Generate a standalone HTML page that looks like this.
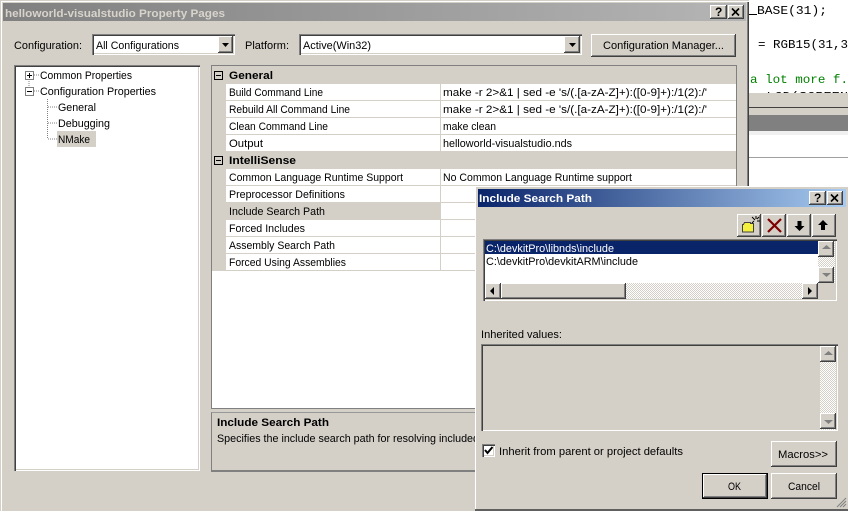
<!DOCTYPE html>
<html><head><meta charset="utf-8"><style>
html,body{margin:0;padding:0;background:#fff}
#p{position:relative;width:848px;height:511px;overflow:hidden;background:#fff;font-family:"Liberation Sans",sans-serif}
#p div{position:absolute;box-sizing:border-box}
.b{background:#d4d0c8}
.w{background:#fff}
.r{background:#d4d0c8;box-shadow:inset -1px -1px #404040,inset 1px 1px #fff,inset -2px -2px #808080,inset 2px 2px #d4d0c8}
.s{box-shadow:inset 1px 1px #808080,inset 2px 2px #404040,inset -1px -1px #fff,inset -2px -2px #d4d0c8}
.d{background:repeating-conic-gradient(#fff 0 25%,#d4d0c8 0 50%) 0 0/2px 2px}
svg{position:absolute;left:0;top:0;overflow:visible}
text{font-size:11px;fill:#000;font-family:"Liberation Sans",sans-serif}
.bd{font-weight:bold}
.m{font-family:"Liberation Mono",monospace;font-size:12px}
</style></head><body><div id="p">

<!-- background code window -->
<svg width="848" height="511">
<rect x="749" y="14" width="8" height="1" fill="#000"/>
<text class="m" x="757" y="14" textLength="70" lengthAdjust="spacingAndGlyphs">BASE(31);</text>
<text class="m" x="758" y="48" textLength="90" lengthAdjust="spacingAndGlyphs">= RGB15(31,3</text>
<text class="m" x="750" y="83" textLength="98" lengthAdjust="spacingAndGlyphs" style="fill:#008000">a lot more f.</text>
<text class="m" x="750" y="100" textLength="98" lengthAdjust="spacingAndGlyphs">: LCD(SCREEN</text>
</svg>
<div class="b" style="left:749px;top:93px;width:99px;height:14px"></div>
<div style="left:749px;top:107px;width:99px;height:1px;background:#404040"></div>
<div class="b" style="left:749px;top:108px;width:99px;height:7px"></div>
<div style="left:749px;top:115px;width:99px;height:16px;background:#808080"></div>
<div style="left:749px;top:131px;width:99px;height:4px;background:#f0f0f0"></div>
<div style="left:749px;top:157px;width:99px;height:1px;background:#a0a0a0"></div>

<!-- main window -->
<div class="b" style="left:0;top:0;width:749px;height:511px;box-shadow:inset 1px 1px #d4d0c8,inset 2px 2px #fff,inset -1px 0 #404040,inset -2px 0 #808080"></div>
<div style="left:3px;top:3px;width:743px;height:18px;background:linear-gradient(90deg,#808080,#b5b5b5)"></div>
<div class="r" style="left:710px;top:5px;width:17px;height:14px"></div>
<div class="r" style="left:728px;top:5px;width:16px;height:14px"></div>

<!-- combos -->
<div class="w s" style="left:92px;top:34px;width:143px;height:21px"></div>
<div class="r" style="left:218px;top:36px;width:15px;height:17px"></div>
<div class="w s" style="left:299px;top:34px;width:283px;height:21px"></div>
<div class="r" style="left:564px;top:36px;width:16px;height:17px"></div>
<div class="r" style="left:591px;top:34px;width:145px;height:23px"></div>

<!-- tree -->
<div class="w s" style="left:14px;top:65px;width:186px;height:406px"></div>
<div class="b" style="left:57px;top:131px;width:39px;height:16px"></div>

<!-- property grid -->
<div class="w" style="left:211px;top:65px;width:526px;height:344px;border:1px solid #808080"></div>
<div class="b" style="left:212px;top:66px;width:524px;height:18px"></div>
<div class="b" style="left:212px;top:84px;width:14px;height:187px"></div>
<div class="b" style="left:226px;top:100px;width:510px;height:1px"></div>
<div class="b" style="left:226px;top:117px;width:510px;height:1px"></div>
<div class="b" style="left:226px;top:134px;width:510px;height:1px"></div>
<div class="b" style="left:212px;top:151px;width:524px;height:18px"></div>
<div class="b" style="left:226px;top:185px;width:510px;height:1px"></div>
<div class="b" style="left:226px;top:202px;width:510px;height:1px"></div>
<div class="b" style="left:226px;top:203px;width:214px;height:17px"></div>
<div class="b" style="left:226px;top:219px;width:510px;height:1px"></div>
<div class="b" style="left:226px;top:236px;width:510px;height:1px"></div>
<div class="b" style="left:226px;top:253px;width:510px;height:1px"></div>
<div class="b" style="left:226px;top:270px;width:510px;height:1px"></div>
<div class="b" style="left:440px;top:84px;width:1px;height:67px"></div>
<div class="b" style="left:440px;top:169px;width:1px;height:102px"></div>
<!-- description -->
<div style="left:211px;top:412px;width:526px;height:60px;border-top:1px solid #999;border-bottom:2px solid #808080;border-left:1px solid #808080;border-right:1px solid #a0a0a0"></div>

<svg width="848" height="511">
<!-- title buttons -->
<text class="bd" x="715" y="16" style="font-size:12px">?</text>
<path d="M732 8.500l7 7M739 8.500l-7 7" stroke="#000" stroke-width="1.600" fill="none"/>
<text class="bd" x="5" y="17" textLength="220" lengthAdjust="spacingAndGlyphs" style="fill:#d8d4cc">helloworld-visualstudio Property Pages</text>

<path d="M222 43h7l-3.500 4z" fill="#000"/>
<path d="M569 43h7l-3.500 4z" fill="#000"/>

<text x="14" y="49" textLength="68" lengthAdjust="spacingAndGlyphs">Configuration:</text>
<text x="96" y="49" textLength="83" lengthAdjust="spacingAndGlyphs">All Configurations</text>
<text x="245" y="49" textLength="44" lengthAdjust="spacingAndGlyphs">Platform:</text>
<text x="303" y="49" textLength="68" lengthAdjust="spacingAndGlyphs">Active(Win32)</text>
<text x="603" y="49" textLength="121" lengthAdjust="spacingAndGlyphs">Configuration Manager...</text>

<!-- tree -->
<path d="M29 79v8M34 75h5M34 91h5" stroke="#808080" stroke-dasharray="1 1" fill="none"/>
<path d="M47.500 99v40M48 107h9M48 123h9M48 139h9" stroke="#808080" stroke-dasharray="1 1" fill="none"/>
<rect x="25.500" y="71.500" width="8" height="8" fill="#fff" stroke="#808080"/>
<path d="M27 75.500h5M29.500 73v5" stroke="#000" fill="none"/>
<rect x="25.500" y="87.500" width="8" height="8" fill="#fff" stroke="#808080"/>
<path d="M27 91.500h5" stroke="#000" fill="none"/>
<text x="40" y="79" textLength="92" lengthAdjust="spacingAndGlyphs">Common Properties</text>
<text x="40" y="95" textLength="116" lengthAdjust="spacingAndGlyphs">Configuration Properties</text>
<text x="58" y="111" textLength="38" lengthAdjust="spacingAndGlyphs">General</text>
<text x="58" y="127" textLength="52" lengthAdjust="spacingAndGlyphs">Debugging</text>
<text x="58" y="143" textLength="32" lengthAdjust="spacingAndGlyphs">NMake</text>

<!-- grid -->
<rect x="214.500" y="71.500" width="8" height="8" fill="#d4d0c8" stroke="#000"/>
<path d="M216 75.500h5" stroke="#000"/>
<rect x="214.500" y="156.500" width="8" height="8" fill="#d4d0c8" stroke="#000"/>
<path d="M216 160.500h5" stroke="#000"/>
<text class="bd" x="229" y="79" textLength="44" lengthAdjust="spacingAndGlyphs">General</text>
<text x="229" y="96" textLength="94" lengthAdjust="spacingAndGlyphs">Build Command Line</text>
<text x="229" y="113" textLength="121" lengthAdjust="spacingAndGlyphs">Rebuild All Command Line</text>
<text x="229" y="130" textLength="99" lengthAdjust="spacingAndGlyphs">Clean Command Line</text>
<text x="229" y="147" textLength="34" lengthAdjust="spacingAndGlyphs">Output</text>
<text class="bd" x="229" y="164" textLength="67" lengthAdjust="spacingAndGlyphs">IntelliSense</text>
<text x="229" y="181" textLength="174" lengthAdjust="spacingAndGlyphs">Common Language Runtime Support</text>
<text x="229" y="198" textLength="116" lengthAdjust="spacingAndGlyphs">Preprocessor Definitions</text>
<text x="229" y="215" textLength="96" lengthAdjust="spacingAndGlyphs">Include Search Path</text>
<text x="229" y="232" textLength="76" lengthAdjust="spacingAndGlyphs">Forced Includes</text>
<text x="229" y="249" textLength="106" lengthAdjust="spacingAndGlyphs">Assembly Search Path</text>
<text x="229" y="266" textLength="117" lengthAdjust="spacingAndGlyphs">Forced Using Assemblies</text>
<text x="443" y="96" textLength="264" lengthAdjust="spacingAndGlyphs">make -r 2&gt;&amp;1 | sed -e 's/(.[a-zA-Z]+):([0-9]+):/1(2):/'</text>
<text x="443" y="113" textLength="264" lengthAdjust="spacingAndGlyphs">make -r 2&gt;&amp;1 | sed -e 's/(.[a-zA-Z]+):([0-9]+):/1(2):/'</text>
<text x="443" y="130" textLength="53" lengthAdjust="spacingAndGlyphs">make clean</text>
<text x="443" y="147" textLength="129" lengthAdjust="spacingAndGlyphs">helloworld-visualstudio.nds</text>
<text x="443" y="181" textLength="189" lengthAdjust="spacingAndGlyphs">No Common Language Runtime support</text>
<text class="bd" x="217" y="426" textLength="112" lengthAdjust="spacingAndGlyphs">Include Search Path</text>
<text x="217" y="442" textLength="262" lengthAdjust="spacingAndGlyphs">Specifies the include search path for resolving included</text>
</svg>

<!-- dialog -->
<div class="b" style="left:475px;top:186px;width:373px;height:325px;box-shadow:inset 1px 1px #fff"></div>
<div style="left:475px;top:509px;width:373px;height:2px;background:#606060"></div>
<div style="left:478px;top:189px;width:368px;height:18px;background:linear-gradient(90deg,#0a246a,#a6caf0)"></div>
<div class="r" style="left:809px;top:191px;width:17px;height:14px"></div>
<div class="r" style="left:827px;top:191px;width:16px;height:14px"></div>

<div class="r" style="left:737px;top:214px;width:24px;height:23px"></div>
<div class="r" style="left:762px;top:214px;width:24px;height:23px"></div>
<div class="r" style="left:787px;top:214px;width:24px;height:23px"></div>
<div class="r" style="left:812px;top:214px;width:24px;height:23px"></div>

<div class="w s" style="left:483px;top:239px;width:354px;height:62px"></div>
<div style="left:485px;top:241px;width:333px;height:13px;background:#0a246a"></div>
<div class="d" style="left:818px;top:241px;width:17px;height:43px"></div>
<div class="r" style="left:818px;top:241px;width:16px;height:16px"></div>
<div class="r" style="left:818px;top:267px;width:16px;height:16px"></div>
<div class="d" style="left:485px;top:283px;width:333px;height:16px"></div>
<div class="r" style="left:485px;top:283px;width:16px;height:16px"></div>
<div class="r" style="left:501px;top:283px;width:125px;height:16px"></div>
<div class="r" style="left:802px;top:283px;width:16px;height:16px"></div>
<div class="b" style="left:818px;top:283px;width:17px;height:16px"></div>

<div class="s" style="left:481px;top:344px;width:357px;height:87px;background:#d4d0c8"></div>
<div class="d" style="left:820px;top:346px;width:16px;height:84px"></div>
<div class="r" style="left:820px;top:346px;width:16px;height:16px"></div>
<div class="r" style="left:820px;top:413px;width:16px;height:16px"></div>

<div class="w s" style="left:482px;top:444px;width:13px;height:13px"></div>
<div class="r" style="left:771px;top:441px;width:66px;height:26px"></div>
<div class="r" style="left:702px;top:473px;width:66px;height:26px;outline:1px solid #000;outline-offset:-1px;box-shadow:inset -2px -2px #404040,inset 2px 2px #fff,inset -3px -3px #808080"></div>
<div class="r" style="left:771px;top:473px;width:66px;height:26px"></div>

<svg width="848" height="511">
<text class="bd" x="479" y="202" textLength="113" lengthAdjust="spacingAndGlyphs" style="fill:#fff">Include Search Path</text>
<text class="bd" x="814" y="202" style="font-size:12px">?</text>
<path d="M831 194.500l7 7M838 194.500l-7 7" stroke="#000" stroke-width="1.600" fill="none"/>

<!-- folder -->
<path d="M742.500 224.500h1l1-2h6v1h3v8.500h-11z" fill="#f4f040" stroke="#404040"/>
<path d="M752 217l3 3M756 216v3M759 217l-2 2M760 221h-3M752 223l2-2" stroke="#000" fill="none"/>
<!-- delete -->
<path d="M768 219l13 13M781 219l-13 13" stroke="#800000" stroke-width="2.200" fill="none"/>
<!-- arrows -->
<path d="M797.500 221h4v5h3l-5 5-5-5h3z" fill="#000"/>
<path d="M823 220l5 5h-3v5h-4v-5h-3z" fill="#000"/>

<text x="486" y="252" textLength="128" lengthAdjust="spacingAndGlyphs" style="fill:#fff">C:\devkitPro\libnds\include</text>
<text x="486" y="265" textLength="152" lengthAdjust="spacingAndGlyphs">C:\devkitPro\devkitARM\include</text>

<path d="M822 249h9l-4.500-4z" fill="#808080"/>
<path d="M822 273h9l-4.500 4z" fill="#808080"/>
<path d="M490 291l4-4v8z" fill="#000"/>
<path d="M808 287l4 4-4 4z" fill="#000"/>

<text x="481" y="338" textLength="81" lengthAdjust="spacingAndGlyphs">Inherited values:</text>
<path d="M824 355h9l-4.500-4z" fill="#808080"/>
<path d="M824 420h9l-4.500 4z" fill="#808080"/>

<path d="M485 450l2.500 3 5-6" stroke="#000" stroke-width="2" fill="none"/>
<text x="499" y="455" textLength="184" lengthAdjust="spacingAndGlyphs">Inherit from parent or project defaults</text>
<text x="778" y="458" textLength="50" lengthAdjust="spacingAndGlyphs">Macros&gt;&gt;</text>
<text x="728" y="490" textLength="13" lengthAdjust="spacingAndGlyphs">OK</text>
<text x="788" y="490" textLength="32" lengthAdjust="spacingAndGlyphs">Cancel</text>
<path d="M837 507l9-9M840 507l6-6M843 507l3-3" stroke="#808080" fill="none"/>
</svg>
</div></body></html>
